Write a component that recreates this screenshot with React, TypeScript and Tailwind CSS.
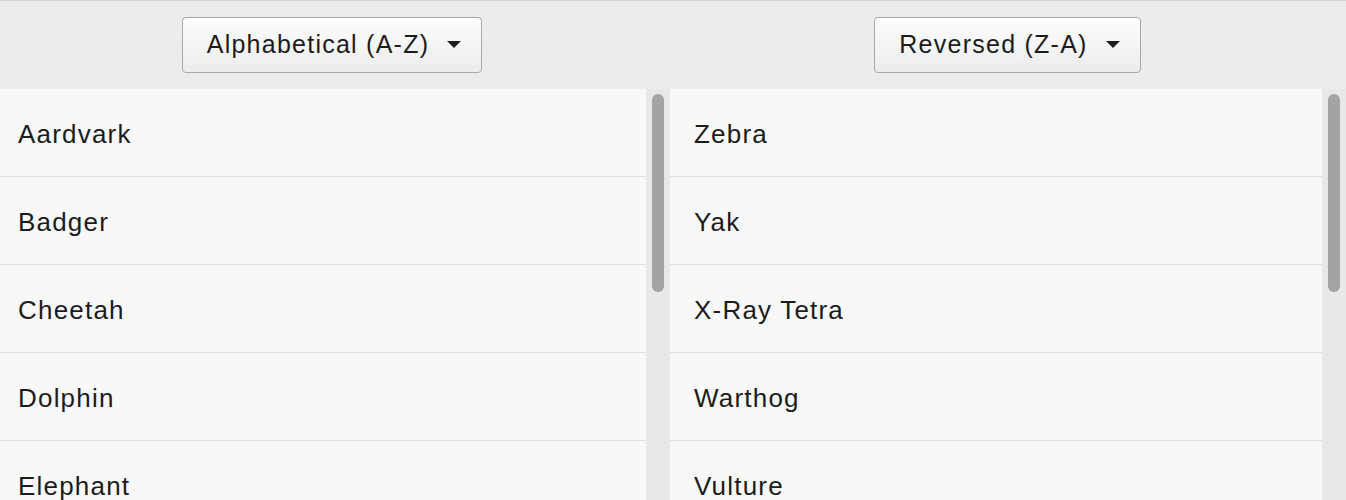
import React from "react";

const animals = [
  "Aardvark",
  "Badger",
  "Cheetah",
  "Dolphin",
  "Elephant",
  "Flamingo",
  "Giraffe",
  "Hippo",
];

const reversed = ["Zebra", "Yak", "X-Ray Tetra", "Warthog", "Vulture", "Urchin", "Tiger", "Sloth"];

const SortButton: React.FC<{ label: string }> = ({ label }) => (
  <button className="h-[56px] flex items-center gap-[18px] pl-[24px] pr-[20px] rounded-[4px] border border-[#a9a9a9] bg-gradient-to-b from-[#fdfdfd] to-[#ececec] text-[#1c1c1c] text-[25px] tracking-[1.25px]">
    <span>{label}</span>
    <span className="w-0 h-0 border-l-[7px] border-r-[7px] border-t-[7px] border-l-transparent border-r-transparent border-t-[#1c1c1c] mb-[2px]" />
  </button>
);

const List: React.FC<{ items: string[]; width: string; pad: string }> = ({ items, width, pad }) => (
  <div className={`flex h-full ${width}`}>
    <div className="flex-1 overflow-hidden bg-[#f8f8f8]">
      {items.map((name) => (
        <div
          key={name}
          className={`h-[88px] flex items-center pt-[3px] border-b border-[#e0e0e0] text-[26px] tracking-[1.2px] text-[#1c1c1c] ${pad}`}
        >
          {name}
        </div>
      ))}
    </div>
    <div className="w-[24px] bg-[#e8e8e8] pt-[5px] flex justify-center">
      <div className="w-[12px] h-[198px] rounded-full bg-[#a3a3a3]" />
    </div>
  </div>
);

export default function App() {
  return (
    <div className="w-[1346px] h-[500px] overflow-hidden flex flex-col bg-[#ececec] font-['Liberation_Sans',Arial,sans-serif]">
      <div className="h-[89px] shrink-0 border-t border-[#d3d3d3] flex">
        <div className="w-[664px] flex justify-center pt-[16px]">
          <SortButton label="Alphabetical (A-Z)" />
        </div>
        <div className="flex-1 flex justify-center pt-[16px] pl-[5px]">
          <SortButton label="Reversed (Z-A)" />
        </div>
      </div>
      <div className="flex flex-1 min-h-0">
        <List items={animals} width="w-[670px]" pad="pl-[18px]" />
        <List items={reversed} width="flex-1" pad="pl-[24px]" />
      </div>
    </div>
  );
}
